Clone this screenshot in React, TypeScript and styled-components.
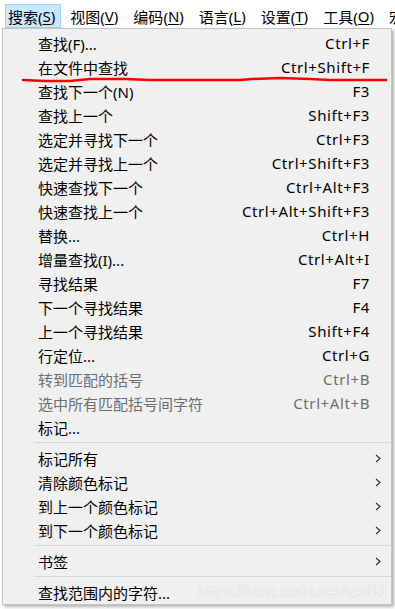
import React from "react";
import styled, { createGlobalStyle } from "styled-components";

const GlobalStyle = createGlobalStyle`
  body {
    margin: 0;
    background: #ffffff;
    font-family: "Noto Sans", "Noto Sans CJK SC", sans-serif;
  }
`;

interface IMenuEntry {
  label: string;
  shortcut?: string;
  disabled?: boolean;
  submenu?: boolean;
  separatorBefore?: boolean;
}

const entries: IMenuEntry[] = [
  { label: "查找(F)...", shortcut: "Ctrl+F" },
  { label: "在文件中查找", shortcut: "Ctrl+Shift+F" },
  { label: "查找下一个(N)", shortcut: "F3" },
  { label: "查找上一个", shortcut: "Shift+F3" },
  { label: "选定并寻找下一个", shortcut: "Ctrl+F3" },
  { label: "选定并寻找上一个", shortcut: "Ctrl+Shift+F3" },
  { label: "快速查找下一个", shortcut: "Ctrl+Alt+F3" },
  { label: "快速查找上一个", shortcut: "Ctrl+Alt+Shift+F3" },
  { label: "替换...", shortcut: "Ctrl+H" },
  { label: "增量查找(I)...", shortcut: "Ctrl+Alt+I" },
  { label: "寻找结果", shortcut: "F7" },
  { label: "下一个寻找结果", shortcut: "F4" },
  { label: "上一个寻找结果", shortcut: "Shift+F4" },
  { label: "行定位...", shortcut: "Ctrl+G" },
  { label: "转到匹配的括号", shortcut: "Ctrl+B", disabled: true },
  { label: "选中所有匹配括号间字符", shortcut: "Ctrl+Alt+B", disabled: true },
  { label: "标记..." },
  { label: "标记所有", submenu: true, separatorBefore: true },
  { label: "清除颜色标记", submenu: true },
  { label: "到上一个颜色标记", submenu: true },
  { label: "到下一个颜色标记", submenu: true },
  { label: "书签", submenu: true, separatorBefore: true },
  { label: "查找范围内的字符...", separatorBefore: true },
];

const barItems = [
  { name: "搜索", key: "S" },
  { name: "视图", key: "V" },
  { name: "编码", key: "N" },
  { name: "语言", key: "L" },
  { name: "设置", key: "T" },
  { name: "工具", key: "O" },
  { name: "宏", key: "M" },
];

const Page = styled.div`
  position: relative;
  width: 395px;
  height: 609px;
  overflow: hidden;
  background: #ffffff;
`;

const MenuBar = styled.div`
  display: flex;
  gap: 6px;
  height: 28px;
  padding: 4px 0 0 5px;
  box-sizing: border-box;
  white-space: nowrap;
  font-size: 15px;
  color: #000;
`;

const BarItem = styled.div<{ $active?: boolean }>`
  display: flex;
  flex-shrink: 0;
  align-items: center;
  height: 24px;
  padding: 0 5px 0 2px;
  box-sizing: border-box;
  border: 1px solid ${(p) => (p.$active ? "#99d1ff" : "transparent")};
  background: ${(p) => (p.$active ? "#cce8ff" : "transparent")};
`;

const Key = styled.span`
  text-decoration: underline;
  text-underline-offset: 2px;
`;

const Popup = styled.div`
  position: absolute;
  left: 2px;
  top: 28px;
  width: 390px;
  box-sizing: border-box;
  padding: 2px 0 0 0;
  background: #f0f0f0;
  border: 1px solid #c4c4c4;
  box-shadow: 2px 2px 3px rgba(0, 0, 0, 0.3);
`;

const Row = styled.div<{ $disabled?: boolean }>`
  display: grid;
  grid-template-columns: 1fr auto 21px;
  align-items: center;
  height: 24px;
  padding-left: 35px;
  font-size: 15px;
  color: ${(p) => (p.$disabled ? "#6d6d6d" : "#000000")};
  white-space: nowrap;
`;

const Shortcut = styled.span`
  text-align: right;
  letter-spacing: 0.6px;
`;

const Arrow = styled.span`
  display: flex;
  justify-content: center;
  padding-right: 6px;
`;

const Separator = styled.div`
  height: 1px;
  margin: 3px 0 3px 31px;
  background: #d7d7d7;
`;

const Scribble = styled.svg`
  position: absolute;
  left: 0;
  top: 0;
  pointer-events: none;
`;

const Watermark = styled.div`
  position: absolute;
  left: 198px;
  top: 583px;
  font-family: "Liberation Sans", Arial, sans-serif;
  font-size: 16px;
  color: #f7f7f7;
  text-shadow: 0 0 1px #b8b8b8;
  white-space: nowrap;
`;

const ChevronIcon = () => (
  <svg width="6" height="9" viewBox="0 0 6 9">
    <path d="M1 1 L5 4.5 L1 8" fill="none" stroke="#333" strokeWidth="1.2" />
  </svg>
);

const App = () => {
  return (
    <>
      <GlobalStyle />
      <Page>
        <MenuBar>
          {barItems.map((b, i) => (
            <BarItem key={b.name} $active={i === 0}>
              {b.name}(<Key>{b.key}</Key>)
            </BarItem>
          ))}
        </MenuBar>
        <Popup>
          {entries.map((e) => (
            <React.Fragment key={e.label}>
              {e.separatorBefore && <Separator />}
              <Row $disabled={e.disabled}>
                <span>{e.label}</span>
                <Shortcut>{e.shortcut}</Shortcut>
                <Arrow>{e.submenu && <ChevronIcon />}</Arrow>
              </Row>
            </React.Fragment>
          ))}
        </Popup>
        <Scribble width="395" height="609">
          <polyline
            points="23,80 45,81 70,81 90,79 125,79 150,80 200,80 240,80 252,79 280,78 310,79 330,80 360,80 386,80"
            fill="none"
            stroke="#ff0000"
            strokeWidth="2.5"
            strokeLinecap="round"
            strokeLinejoin="round"
          />
        </Scribble>
        <Watermark>https://blog.csdn.net/aefj11</Watermark>
      </Page>
    </>
  );
};

export default App;
